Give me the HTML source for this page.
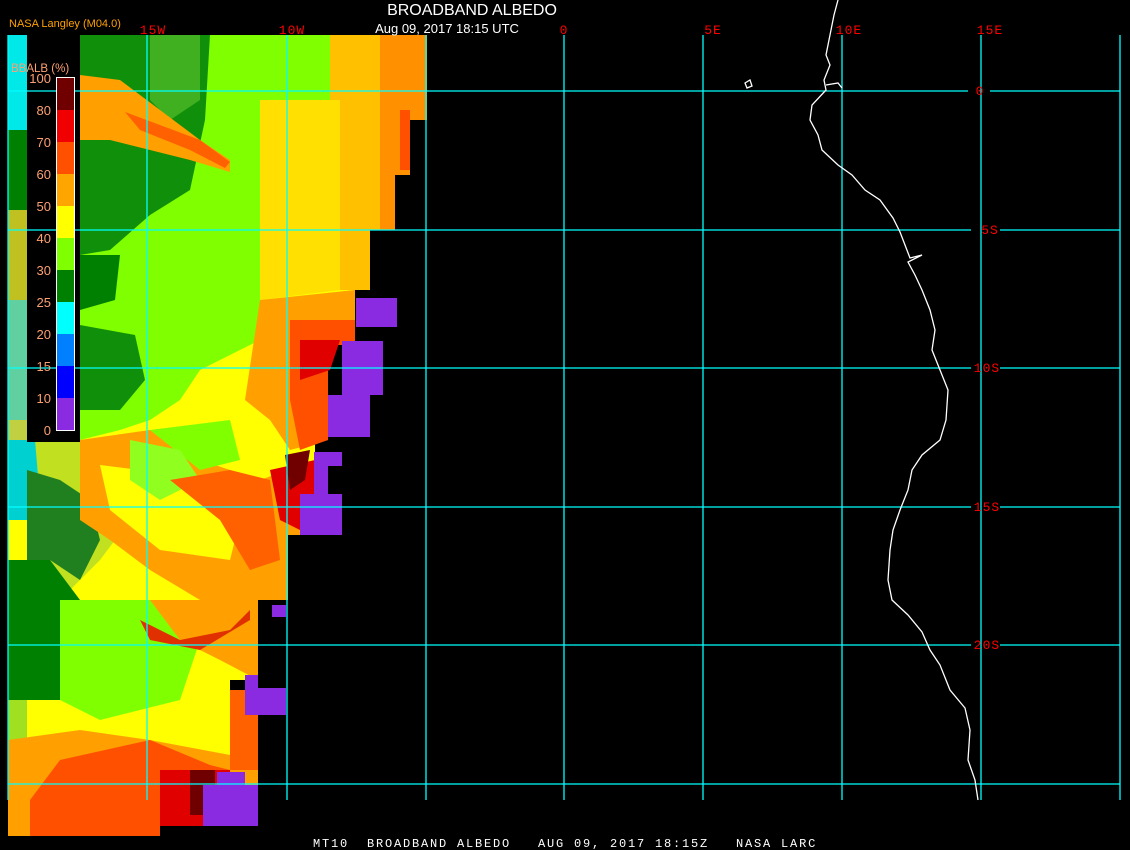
<!DOCTYPE html>
<html><head><meta charset="utf-8"><style>
html,body{margin:0;padding:0;background:#000;}
body{width:1130px;height:850px;overflow:hidden;position:relative;font-family:"Liberation Mono",monospace;}
svg{position:absolute;left:0;top:0;}
</style></head><body>
<svg width="1130" height="850" viewBox="0 0 1130 850">
<rect width="1130" height="850" fill="#000"/>
<polygon fill="#ffff00" points="8,35 427,35 427,120 410,120 410,175 395,175 395,230 370,230 370,290 355,290 355,340 328,340 328,440 315,440 315,494 300,494 300,535 288,535 288,600 258,600 258,680 230,680 230,770 258,770 258,826 160,826 160,836 8,836"/>
<rect x="8" y="35" width="19" height="95" fill="#00e8e8"/>
<rect x="8" y="130" width="19" height="80" fill="#008000"/>
<rect x="8" y="210" width="19" height="90" fill="#c0c020"/>
<rect x="8" y="300" width="19" height="120" fill="#60d0a0"/>
<rect x="8" y="420" width="19" height="60" fill="#c0d040"/>
<polygon fill="#c0e020" points="27,442 80,442 120,460 130,520 100,560 60,600 27,600"/>
<polygon fill="#00d0d0" points="8,440 35,440 40,500 27,520 8,520"/>
<polygon fill="#208020" points="27,470 60,480 90,500 100,540 80,580 50,560 27,560"/>
<polygon fill="#008000" points="8,560 50,560 80,600 65,660 60,700 8,700"/>
<rect x="8" y="700" width="19" height="40" fill="#a0e020"/>
<rect x="27" y="35" width="53" height="407" fill="#000"/>
<polygon fill="#80ff00" points="80,35 330,35 330,100 300,100 300,200 260,200 260,340 240,350 200,370 180,400 150,420 120,430 80,440"/>
<polygon fill="#10900a" points="80,35 210,35 205,120 190,190 150,215 110,250 80,255"/>
<polygon fill="#40b020" points="150,35 200,35 200,100 170,120 150,100"/>
<polygon fill="#008000" points="80,255 120,255 115,300 80,310"/>
<polygon fill="#10900a" points="80,325 135,335 145,380 120,410 80,410"/>
<polygon fill="#ffa000" points="80,75 120,80 160,110 200,140 230,160 230,172 190,160 150,150 110,140 80,140"/>
<polygon fill="#ff6000" points="125,112 200,140 230,162 225,168 190,150 140,130"/>
<polygon fill="#ffe000" points="260,100 340,100 340,290 260,300"/>
<polygon fill="#ffc000" points="330,35 427,35 427,120 410,120 410,175 395,175 395,230 370,230 370,290 340,290 340,100 330,100"/>
<polygon fill="#ff9000" points="380,35 427,35 427,120 410,120 410,175 395,175 395,230 380,230"/>
<rect x="400" y="110" width="10" height="60" fill="#ff5000"/>
<polygon fill="#ffa000" points="260,300 355,290 355,340 328,340 328,440 290,450 270,420 245,400"/>
<polygon fill="#ff5000" points="290,320 355,320 355,345 328,345 328,440 300,450 290,400"/>
<polygon fill="#e00000" points="300,340 340,340 330,370 300,380"/>
<polygon fill="#ffa000" points="80,440 150,430 200,460 260,480 288,470 300,494 300,535 288,535 288,600 258,600 200,600 150,570 110,540 80,520"/>
<polygon fill="#ffff00" points="100,465 180,475 240,520 230,560 160,550 110,510"/>
<polygon fill="#80ff00" points="150,430 230,420 240,460 200,470"/>
<polygon fill="#90ff20" points="130,440 180,450 200,480 160,500 130,480"/>
<polygon fill="#ff6000" points="170,480 230,470 270,480 280,560 250,570 220,520"/>
<polygon fill="#e00000" points="270,470 315,460 315,494 300,494 300,530 280,520"/>
<polygon fill="#700000" points="285,455 310,450 305,480 290,490"/>
<polygon fill="#80ff00" points="60,600 150,600 200,640 180,700 100,720 60,700"/>
<polygon fill="#ffa000" points="150,600 258,600 258,680 220,660 180,640"/>
<polygon fill="#e03000" points="140,620 180,640 230,630 250,610 250,620 200,650 150,640"/>
<polygon fill="#ffa000" points="8,740 80,730 150,740 230,755 230,770 258,770 258,826 160,826 160,836 8,836"/>
<polygon fill="#ff5000" points="60,760 150,740 210,765 230,770 230,826 160,826 160,836 30,836 30,800"/>
<polygon fill="#e00000" points="160,770 230,770 230,826 160,826"/>
<rect x="190" y="770" width="25" height="45" fill="#700000"/>
<rect x="230" y="690" width="28" height="80" fill="#ff6000"/>
<g fill="#8a2be2">
<rect x="356" y="298" width="41" height="29"/>
<rect x="342" y="341" width="41" height="54"/>
<rect x="328" y="395" width="42" height="42"/>
<rect x="314" y="452" width="28" height="14"/>
<rect x="314" y="466" width="14" height="28"/>
<rect x="300" y="494" width="42" height="41"/>
<rect x="272" y="605" width="14" height="12"/>
<rect x="245" y="675" width="13" height="15"/>
<rect x="245" y="688" width="41" height="27"/>
<rect x="217" y="772" width="28" height="15"/>
<rect x="203" y="785" width="55" height="41"/>
</g>
<g stroke="#00ffff" stroke-width="1.3" fill="none">
<line x1="8" y1="35" x2="8" y2="800"/>
<line x1="147" y1="35" x2="147" y2="800"/>
<line x1="287" y1="35" x2="287" y2="800"/>
<line x1="426" y1="35" x2="426" y2="800"/>
<line x1="564" y1="35" x2="564" y2="800"/>
<line x1="703" y1="35" x2="703" y2="800"/>
<line x1="842" y1="35" x2="842" y2="800"/>
<line x1="981" y1="35" x2="981" y2="800"/>
<line x1="1120" y1="35" x2="1120" y2="800"/>
<line x1="8" y1="91" x2="968" y2="91"/><line x1="990" y1="91" x2="1120" y2="91"/>
<line x1="8" y1="230" x2="971" y2="230"/><line x1="1000" y1="230" x2="1120" y2="230"/>
<line x1="8" y1="368" x2="971" y2="368"/><line x1="1000" y1="368" x2="1120" y2="368"/>
<line x1="8" y1="507" x2="971" y2="507"/><line x1="1000" y1="507" x2="1120" y2="507"/>
<line x1="8" y1="645" x2="971" y2="645"/><line x1="1000" y1="645" x2="1120" y2="645"/>
<line x1="8" y1="784" x2="1120" y2="784"/>
</g>
<polyline fill="none" stroke="#fff" stroke-width="1.3" points="838,0 834,15 830,35 826,55 830,65 824,80 826,90 812,105 810,120 818,135 822,150 838,165 852,175 865,190 880,200 893,218 900,232 905,245 910,258 922,255 908,262 915,275 922,290 930,310 935,330 932,350 940,370 948,390 946,420 940,440 922,455 912,470 908,490 900,510 893,530 890,550 888,580 892,600 908,615 922,632 930,650 940,665 950,690 965,708 970,730 968,760 975,780 978,800"/>
<polygon fill="none" stroke="#fff" stroke-width="1.3" points="745,83 750,80 752,86 747,88"/>
<polyline fill="none" stroke="#fff" stroke-width="1.3" points="826,85 838,83 842,88"/>
<g stroke="none">
<rect x="57" y="78" width="17" height="32" fill="#700000"/>
<rect x="57" y="110" width="17" height="32" fill="#f00000"/>
<rect x="57" y="142" width="17" height="32" fill="#ff5000"/>
<rect x="57" y="174" width="17" height="32" fill="#ffa500"/>
<rect x="57" y="206" width="17" height="32" fill="#ffff00"/>
<rect x="57" y="238" width="17" height="32" fill="#80ff00"/>
<rect x="57" y="270" width="17" height="32" fill="#008000"/>
<rect x="57" y="302" width="17" height="32" fill="#00ffff"/>
<rect x="57" y="334" width="17" height="32" fill="#0080ff"/>
<rect x="57" y="366" width="17" height="32" fill="#0000ff"/>
<rect x="57" y="398" width="17" height="32" fill="#8a2be2"/>
</g>
<rect x="56.5" y="77.5" width="18" height="353" fill="none" stroke="#fff" stroke-width="1"/>
<g fill="#ffa070" font-family="Liberation Sans, sans-serif" font-size="13" text-anchor="end">
<text x="51" y="83">100</text><text x="51" y="115">80</text><text x="51" y="147">70</text>
<text x="51" y="179">60</text><text x="51" y="211">50</text><text x="51" y="243">40</text>
<text x="51" y="275">30</text><text x="51" y="307">25</text><text x="51" y="339">20</text>
<text x="51" y="371">15</text><text x="51" y="403">10</text><text x="51" y="435">0</text>
</g>
<text x="11" y="72" fill="#ffa070" font-family="Liberation Sans, sans-serif" font-size="11.5">BBALB (%)</text>
<text x="9" y="27" fill="#ffa000" font-family="Liberation Sans, sans-serif" font-size="11">NASA Langley (M04.0)</text>
<g fill="#ff0000" font-family="Liberation Mono, monospace" font-size="13" text-anchor="middle" letter-spacing="1">
<text x="153" y="34">15W</text><text x="292" y="34">10W</text><text x="564" y="34">0</text>
<text x="713" y="34">5E</text><text x="849" y="34">10E</text><text x="990" y="34">15E</text>
<text x="980" y="95">0</text><text x="990" y="234">5S</text><text x="987" y="372">10S</text>
<text x="987" y="511">15S</text><text x="987" y="649">20S</text>
</g>
<text x="472" y="15" fill="#fff" font-family="Liberation Sans, sans-serif" font-size="16" text-anchor="middle">BROADBAND ALBEDO</text>
<text x="447" y="33" fill="#fff" font-family="Liberation Sans, sans-serif" font-size="13" text-anchor="middle">Aug 09, 2017 18:15 UTC</text>
<text x="313" y="847" fill="#fff" font-family="Liberation Mono, monospace" font-size="12" letter-spacing="1.8" xml:space="preserve">MT10  BROADBAND ALBEDO   AUG 09, 2017 18:15Z   NASA LARC</text>
</svg>
</body></html>
